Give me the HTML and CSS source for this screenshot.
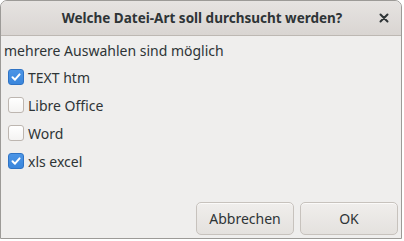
FILE: index.html
```html
<!DOCTYPE html>
<html lang="de">
<head>
    <meta charset="UTF-8">
    <title>Welche Datei-Art soll durchsucht werden?</title>
    <link rel="stylesheet" href="styles.css">
</head>
<body>
    <div class="dialog">
        <div class="titlebar">
            <span class="title">Welche Datei-Art soll durchsucht werden?</span>
            <span class="close">
                <svg width="10" height="10" viewBox="0 0 10 10"><path d="M1.5 1.5 L8.5 8.5 M8.5 1.5 L1.5 8.5" stroke="#2e3436" stroke-width="2" stroke-linecap="round"/></svg>
            </span>
        </div>
        <div class="content">
            <div class="hint">mehrere Auswahlen sind möglich</div>
            <label class="check"><span class="box on"><svg width="12" height="12" viewBox="0 0 12 12"><path d="M2.5 6.2 L5 8.7 L9.6 3.4" fill="none" stroke="#fff" stroke-width="2" stroke-linecap="round" stroke-linejoin="round"/></svg></span>TEXT htm</label>
            <label class="check"><span class="box"></span>Libre Office</label>
            <label class="check"><span class="box"></span>Word</label>
            <label class="check"><span class="box on"><svg width="12" height="12" viewBox="0 0 12 12"><path d="M2.5 6.2 L5 8.7 L9.6 3.4" fill="none" stroke="#fff" stroke-width="2" stroke-linecap="round" stroke-linejoin="round"/></svg></span>xls excel</label>
        </div>
        <div class="actions">
            <button class="btn">Abbrechen</button>
            <button class="btn">OK</button>
        </div>
    </div>
</body>
</html>
```
FILE: styles.css
```css
body {
    margin: 0;
    background: #ffffff;
    font-family: "Noto Sans", "Open Sans", sans-serif;
    font-size: 14px;
    color: #2e3436;
}
.dialog {
    width: 400px;
    height: 237px;
    border: 1px solid #9c9a97;
    border-radius: 7px 7px 0 0;
    background: #efeeed;
    display: flex;
    flex-direction: column;
    overflow: hidden;
}
.titlebar {
    height: 34px;
    flex: none;
    background: linear-gradient(#e6e3e1, #d9d5d2);
    border-bottom: 1px solid #bdb8b3;
    display: flex;
    align-items: center;
    justify-content: center;
    position: relative;
}
.title {
    font-weight: bold;
    font-size: 13.5px;
    color: #2e3436;
    margin-left: 2px;
}
.close {
    position: absolute;
    right: 12px;
    top: 12px;
    width: 10px;
    height: 10px;
    display: flex;
}
.content {
    flex: 1;
    padding: 5px 0 0 3px;
    display: flex;
    flex-direction: column;
}
.hint {
    height: 20px;
    line-height: 20px;
    margin-bottom: 2px;
}
.check {
    display: flex;
    align-items: center;
    height: 28px;
    gap: 4px;
    padding-left: 4px;
}
.box {
    width: 14px;
    height: 14px;
    border: 1px solid #bdb6b0;
    border-radius: 3px;
    background: linear-gradient(#ffffff, #f4f3f2);
    display: flex;
    align-items: center;
    justify-content: center;
}
.box.on {
    border-color: #2f73c4;
    background: linear-gradient(#4c95e6, #3a86dc);
}
.actions {
    display: flex;
    justify-content: flex-end;
    gap: 6px;
    padding: 0 3px 3px 0;
}
.btn {
    width: 98px;
    height: 33px;
    font-family: inherit;
    font-size: 14px;
    color: #2e3436;
    border: 1px solid #c7c2bd;
    border-radius: 5px;
    background: linear-gradient(#f0eeec, #e4e1de);
    box-shadow: inset 0 1px #fbfaf9;
}
```
